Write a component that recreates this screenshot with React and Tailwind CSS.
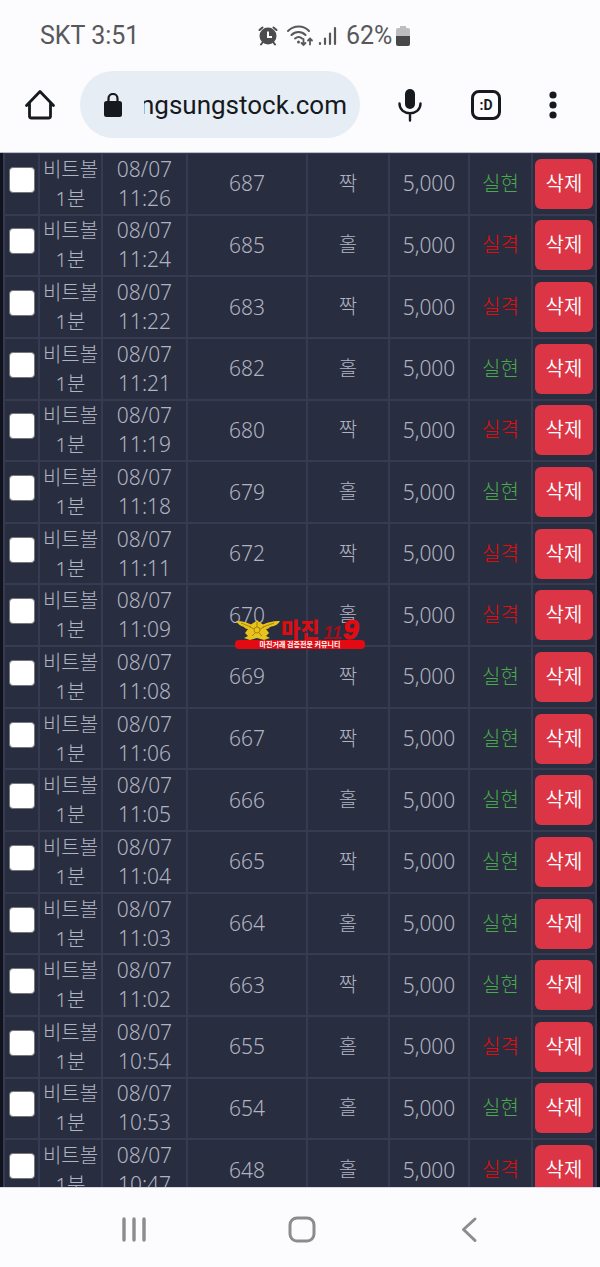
import { useState } from "react";

const WIN = "실현";
const LOSE = "실격";

const bets = [
  { time: "11:26", round: 687, pick: "짝", result: WIN },
  { time: "11:24", round: 685, pick: "홀", result: LOSE },
  { time: "11:22", round: 683, pick: "짝", result: LOSE },
  { time: "11:21", round: 682, pick: "홀", result: WIN },
  { time: "11:19", round: 680, pick: "짝", result: LOSE },
  { time: "11:18", round: 679, pick: "홀", result: WIN },
  { time: "11:11", round: 672, pick: "짝", result: LOSE },
  { time: "11:09", round: 670, pick: "홀", result: LOSE },
  { time: "11:08", round: 669, pick: "짝", result: WIN },
  { time: "11:06", round: 667, pick: "짝", result: WIN },
  { time: "11:05", round: 666, pick: "홀", result: WIN },
  { time: "11:04", round: 665, pick: "짝", result: WIN },
  { time: "11:03", round: 664, pick: "홀", result: WIN },
  { time: "11:02", round: 663, pick: "짝", result: WIN },
  { time: "10:54", round: 655, pick: "홀", result: LOSE },
  { time: "10:53", round: 654, pick: "홀", result: WIN },
  { time: "10:47", round: 648, pick: "홀", result: LOSE },
];

function StatusBar() {
  return (
    <div className="flex items-center pl-10 pt-5 text-[25px] leading-8 text-[#58585a]">
      <span className="w-[218px]">SKT 3:51</span>
      <svg className="h-5 w-5" viewBox="0 0 20 20" fill="none" stroke="#4c4c4e">
        <circle cx="10" cy="10" r="8.500" fill="#4c4c4e" stroke="none" />
        <path d="M1.500 4 4.500 1.500M18.500 4 15.500 1.500M4.500 16.500 3 18.500M15.500 16.500l1.500 2" strokeWidth="2" strokeLinecap="round" />
        <path d="M10 5.500v5.500h4" stroke="#fcfbfe" strokeWidth="2" />
      </svg>
      <svg className="ml-2 h-6 w-7" viewBox="0 0 28 24" fill="none" stroke="#58585a" strokeWidth="2" strokeLinecap="round">
        <path d="M2 7c6-6 15.500-6 21 0M5.500 11c4-4 10-4 14 0M9 14.500c2.500-2 5-2 7 0" />
        <circle cx="12.500" cy="18" r="1.500" fill="#58585a" stroke="none" />
        <path d="M17.500 15v6M15.500 19l2 2 2-2M24 20.500v-6M22 16.500l2-2 2 2" strokeWidth="1.800" />
      </svg>
      <svg className="ml-1 h-5 w-5" viewBox="0 0 20 20" stroke="#58585a" strokeWidth="2.200" strokeLinecap="round">
        <path d="M2 17v1M7 12.500V18M12 7.500V18M17 2v16" />
      </svg>
      <span className="ml-2">62%</span>
      <svg className="ml-1 h-5 w-[14px]" viewBox="0 0 14 20">
        <path d="M4 0h6v2h2a2 2 0 0 1 2 2v6H0V4a2 2 0 0 1 2-2h2z" fill="#bdbdbf" />
        <path d="M0 10h14v8a2 2 0 0 1-2 2H2a2 2 0 0 1-2-2z" fill="#48484a" />
      </svg>
    </div>
  );
}

function BrowserBar() {
  return (
    <div className="flex items-center pb-3.5 pl-6 pr-[43px] pt-[19px] text-[#16191d]">
      <button aria-label="Home" className="mr-6 h-8 w-8 shrink-0">
        <svg className="h-8 w-8" viewBox="0 0 32 32" fill="none" stroke="currentColor" strokeWidth="2.800" strokeLinecap="round" strokeLinejoin="round">
          <path d="M2.500 16.500 16 2.500l13.500 14M5.500 14v13a2 2 0 0 0 2 2h17a2 2 0 0 0 2-2V14" />
        </svg>
      </button>
      <div className="flex h-[67px] min-w-0 flex-1 items-center rounded-full bg-[#e6edf4] pl-6 pr-[13px]">
        <svg className="h-6 w-[18px] shrink-0" viewBox="0 0 18 24" fill="currentColor">
          <rect y="8" width="18" height="16" rx="2.500" />
          <path d="M4.500 9V5.500a4.500 4.500 0 0 1 9 0V9" fill="none" stroke="currentColor" strokeWidth="2.200" />
        </svg>
        <input
          aria-label="Address"
          dir="rtl"
          readOnly
          value="ngsungstock.com"
          className="ml-[22px] h-10 min-w-0 flex-1 bg-transparent text-[26px] outline-none"
        />
      </div>
      <button aria-label="Voice search" className="ml-[38px] h-9 w-6 shrink-0">
        <svg className="h-9 w-6" viewBox="0 0 24 36" fill="none" stroke="currentColor" strokeWidth="2.400" strokeLinecap="round">
          <rect x="7" y="2" width="10" height="20" rx="5" fill="currentColor" stroke="none" />
          <path d="M1.500 16.500c0 13 21 13 21 0M12 26.500V33.500" />
        </svg>
      </button>
      <button
        aria-label="Tabs"
        className="ml-[49px] h-[30px] w-[30px] shrink-0 rounded-lg border-3 border-current text-sm leading-none font-bold"
      >
        :D
      </button>
      <button aria-label="Menu" className="ml-12 h-8 w-2 shrink-0">
        <svg className="h-8 w-2" viewBox="0 0 8 32" fill="currentColor">
          <circle cx="4" cy="6" r="3.600" />
          <circle cx="4" cy="16" r="3.600" />
          <circle cx="4" cy="26" r="3.600" />
        </svg>
      </button>
    </div>
  );
}

function BetTable() {
  const [checked, setChecked] = useState([]);

  const toggle = (round) =>
    setChecked((prev) => (prev.includes(round) ? prev.filter((r) => r !== round) : [...prev, round]));

  return (
    <table className="-mt-px h-[1050px] w-full table-fixed border-collapse bg-[#292d40] text-center text-[21px] leading-[29px] font-light text-[#b0b4c1] [&_td]:border-2 [&_td]:border-[#363b51] [&_td]:p-0">
      <colgroup>
        <col className="w-[35px]" />
        <col className="w-[63px]" />
        <col className="w-[85px]" />
        <col className="w-[120px]" />
        <col className="w-[82px]" />
        <col className="w-[80px]" />
        <col className="w-[63px]" />
        <col className="w-[64px]" />
      </colgroup>
      <tbody>
        {bets.map((bet) => (
          <tr key={bet.round}>
            <td>
              <input
                type="checkbox"
                aria-label={`${bet.round}`}
                checked={checked.includes(bet.round)}
                onChange={() => toggle(bet.round)}
                className="mx-auto mb-2 block h-[26px] w-[26px] appearance-none rounded border border-[#77777b] bg-white checked:bg-blue-500"
              />
            </td>
            <td className="text-xl leading-[29px] whitespace-nowrap">
              비트볼
              <br />
              1분
            </td>
            <td>
              08/07
              <br />
              {bet.time}
            </td>
            <td>{bet.round}</td>
            <td className="text-xl">{bet.pick}</td>
            <td>5,000</td>
            <td className={bet.result === WIN ? "text-xl text-[#48ab4c]" : "text-xl text-[#e60c0c]"}>{bet.result}</td>
            <td>
              <button className="mx-auto block h-[50px] w-[58px] rounded-md bg-[#dc3546] text-xl font-[350] text-white">삭제</button>
            </td>
          </tr>
        ))}
      </tbody>
    </table>
  );
}

function Watermark() {
  return (
    <div className="pointer-events-none absolute inset-0 m-auto h-8 w-[130px]">
      <svg className="h-8 w-[130px]" viewBox="0 0 130 32">
        <g fill="#e9c21b">
          <path d="M2 3c6 0 11 2 15 4l5-5 5 5c4-2 10-4 18-4-2 4-6 5-10 6 0 0-1 2-4 2l3 4-3 3 4 2-6 2-7-2-7 2-6-2 4-2-3-3 3-4c-3 0-4-2-4-2-4-1-6-3-8-6z" />
          <circle cx="22" cy="12" r="8" />
        </g>
        <g fill="none" stroke="#8a6a08" strokeWidth="0.700">
          <circle cx="22" cy="12" r="3" />
          <path d="M22 4v5M15 9l4 2M29 9l-4 2M17 18l3-3M27 18l-3-3M6 5l10 4M39 5l-11 4" />
        </g>
        <text x="46" y="19" fontSize="21" fontWeight="900" fill="#dc0d12">
          마진
        </text>
        <g className="font-['Liberation_Sans',sans-serif] font-bold italic">
          <text x="88" y="21" fontSize="18" fill="#a50d18">
            11
          </text>
          <text x="108" y="21" fontSize="28" fill="#e30b11" stroke="#e30b11">
            9
          </text>
        </g>
        <rect y="22" width="130" height="9" rx="4" fill="#e30b11" />
        <text x="65" y="29" fontSize="7" fontWeight="700" textAnchor="middle" fill="#fff">
          마진거래 검증전문 커뮤니티
        </text>
      </svg>
    </div>
  );
}

function NavBar() {
  return (
    <nav className="flex h-20 shrink-0 items-center justify-between border-t border-[#d9d8e4] bg-[#fcfbfe] pl-[118px] pr-[115px] pt-1 text-[#8c8b8e]">
      <button aria-label="Recent apps">
        <svg className="h-8 w-8" viewBox="0 0 32 32" stroke="currentColor" strokeWidth="3.400" strokeLinecap="round">
          <path d="M6 5v21M16 5v21M26 5v21" />
        </svg>
      </button>
      <button aria-label="Home screen">
        <svg className="h-8 w-8" viewBox="0 0 32 32" fill="none" stroke="currentColor" strokeWidth="3">
          <rect x="4" y="4" width="24" height="23" rx="7" />
        </svg>
      </button>
      <button aria-label="Back">
        <svg className="h-8 w-8" viewBox="0 0 32 32" fill="none" stroke="currentColor" strokeWidth="3" strokeLinecap="round" strokeLinejoin="round">
          <path d="M22 5 10.500 15.500 22 26.500" />
        </svg>
      </button>
    </nav>
  );
}

export default function App() {
  return (
    <div className="relative flex h-screen flex-col overflow-hidden bg-[#fcfbfe] font-['Roboto','Noto_Sans_CJK_KR',sans-serif]">
      <header className="shrink-0 border-b border-[#b9bdc9]">
        <StatusBar />
        <BrowserBar />
      </header>
      <main className="min-h-0 flex-1 overflow-hidden bg-[#10131e] px-[3px] font-['Noto_Sans','Noto_Sans_CJK_KR',sans-serif]">
        <BetTable />
      </main>
      <NavBar />
      <Watermark />
    </div>
  );
}
